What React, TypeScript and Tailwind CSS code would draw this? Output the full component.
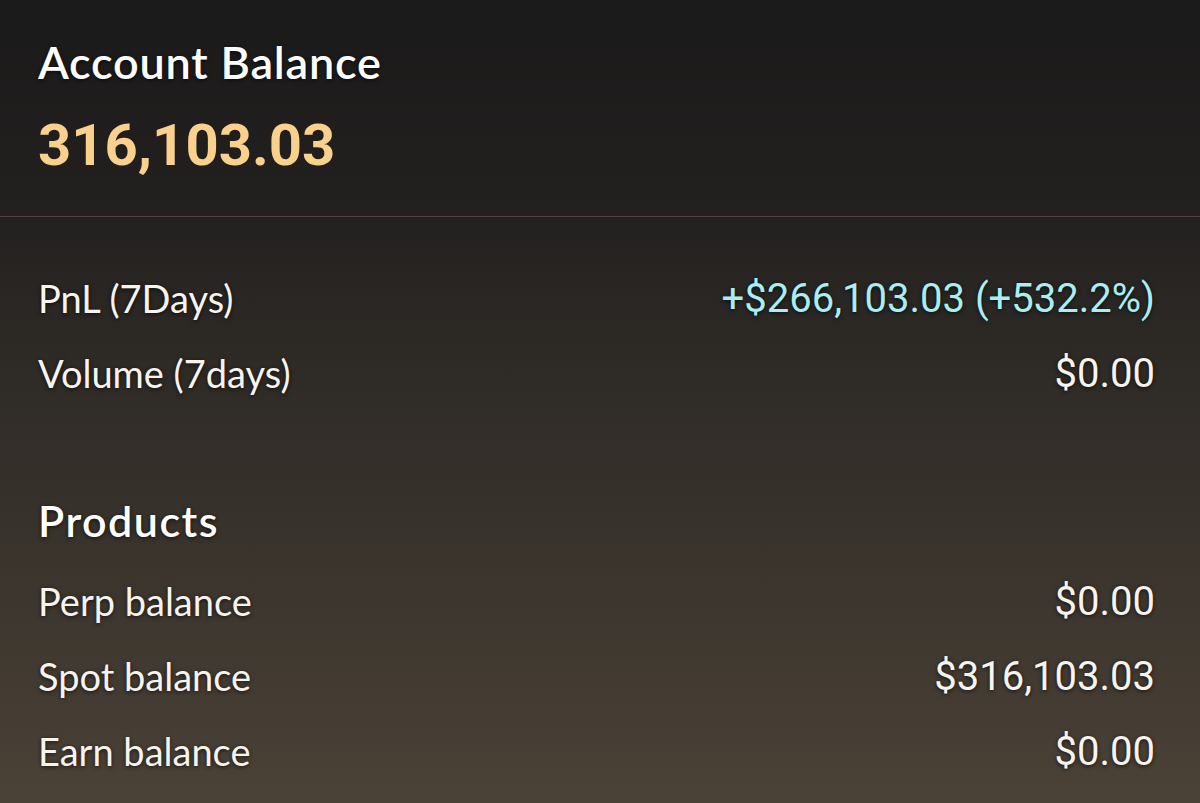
import React from "react";

const label = "font-['Lato','Noto_Sans',sans-serif] text-[38px] text-[#f7f3ee] [text-shadow:0_1px_4px_rgba(0,0,0,0.7)]";
const value = "font-['Roboto','Liberation_Sans',sans-serif] text-[40px] [text-shadow:0_1px_4px_rgba(0,0,0,0.7)]";

function Row({ l, v, cyan }: { l: string; v: string; cyan?: boolean }) {
  return (
    <div className="flex items-center justify-between h-[75px]">
      <span className={label}>{l}</span>
      <span className={value + (cyan ? " text-[#a9eef3]" : " text-[#f7f3ee]")}>{v}</span>
    </div>
  );
}

export default function App() {
  return (
    <div className="w-[1200px] h-[803px] overflow-hidden bg-[linear-gradient(180deg,#1b1a1a_0%,#22201f_25%,#2e2a26_45%,#3a342d_70%,#4b4237_100%)]">
      <div className="px-[38px] pt-[34px] pb-[38px]">
        <div className="font-['Lato','Noto_Sans',sans-serif] text-[45px] tracking-[0.8px] font-semibold text-white leading-[56px] [text-shadow:0_1px_4px_rgba(0,0,0,0.7)]">
          Account Balance
        </div>
        <div className="mt-[22px] font-['Roboto','Liberation_Sans',sans-serif] text-[58px] font-bold text-[#f9d08c] leading-[66px]">
          316,103.03
        </div>
      </div>
      <div className="h-px bg-[#4b4241]" />
      <div className="pl-[38px] pr-[45px] pt-[44px]">
        <Row l="PnL (7Days)" v="+$266,103.03 (+532.2%)" cyan />
        <Row l="Volume (7days)" v="$0.00" />
        <div className="h-[67px]" />
        <div className="font-['Lato','Noto_Sans',sans-serif] text-[43px] tracking-[1.5px] font-semibold text-white leading-[86px] [text-shadow:0_1px_4px_rgba(0,0,0,0.7)]">
          Products
        </div>
        <Row l="Perp balance" v="$0.00" />
        <Row l="Spot balance" v="$316,103.03" />
        <Row l="Earn balance" v="$0.00" />
      </div>
    </div>
  );
}
